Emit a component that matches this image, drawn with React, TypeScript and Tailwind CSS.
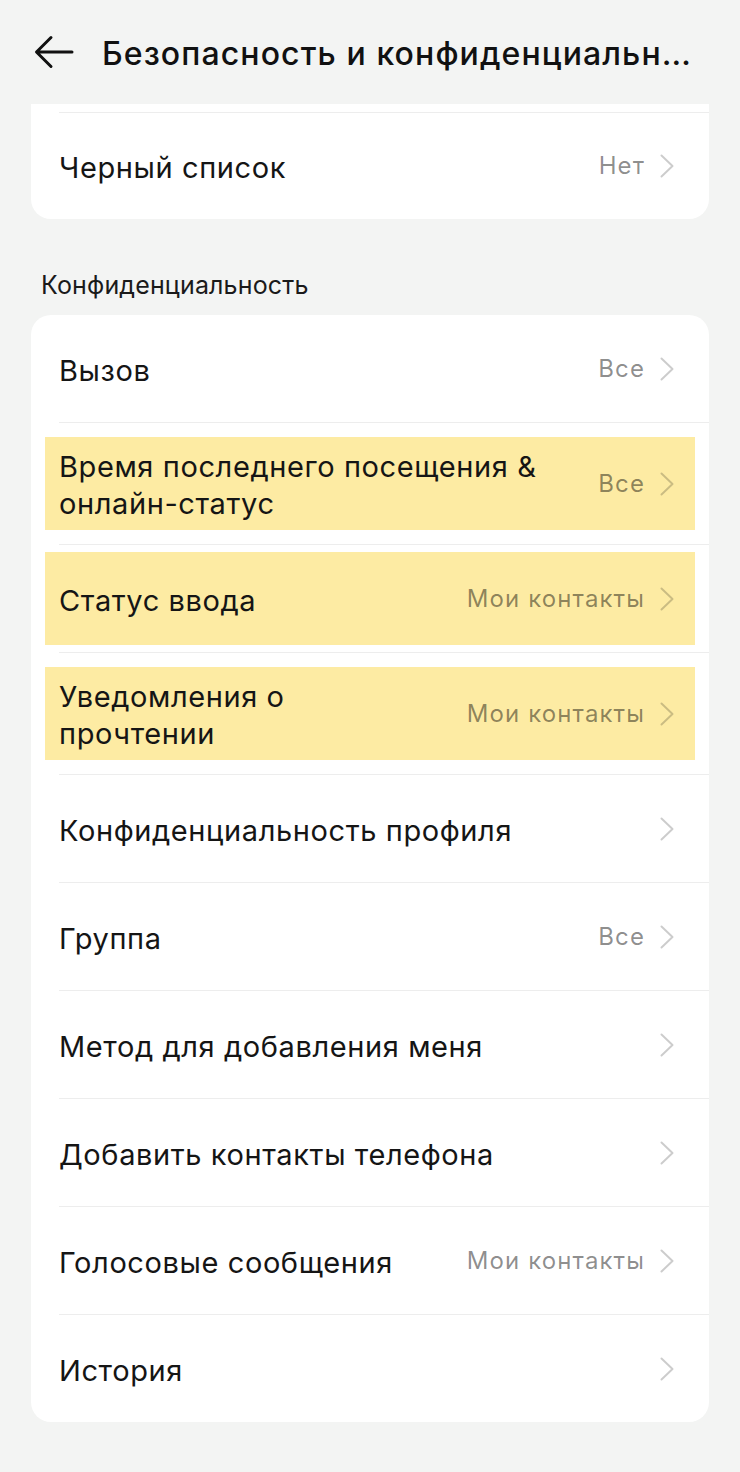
import React from 'react';

type Row = { label: string; value?: string; hl?: boolean; two?: boolean };

const privacyRows: Row[] = [
  { label: 'Вызов', value: 'Все' },
  { label: 'Время последнего посещения &\nонлайн-статус', value: 'Все', hl: true, two: true },
  { label: 'Статус ввода', value: 'Мои контакты', hl: true },
  { label: 'Уведомления о\nпрочтении', value: 'Мои контакты', hl: true, two: true },
  { label: 'Конфиденциальность профиля' },
  { label: 'Группа', value: 'Все' },
  { label: 'Метод для добавления меня' },
  { label: 'Добавить контакты телефона' },
  { label: 'Голосовые сообщения', value: 'Мои контакты' },
  { label: 'История' },
];

function Chevron() {
  return (
    <svg width="14" height="24" viewBox="0 0 14 24" fill="none" className="shrink-0">
      <path d="M1.5 1.5 L12.5 12 L1.5 22.5" stroke="rgba(0,0,0,0.2)" strokeWidth="2" strokeLinecap="round" strokeLinejoin="round" />
    </svg>
  );
}

function Value({ text }: { text: string }) {
  return <span className="text-[24px] tracking-[1.1px] text-black/45 mr-[15px] whitespace-nowrap">{text}</span>;
}

function SettingRow({ row, first }: { row: Row; first?: boolean }) {
  return (
    <div>
      {!first && <div className="ml-[28px] h-px bg-[#ededed]" />}
      <div className={row.two ? 'py-[14px]' : 'py-[7px]'}>
        <div className={`mx-[14px] min-h-[93px] flex items-center pl-[14px] pr-[21px] ${row.hl ? 'bg-[#fdeba3]' : ''}`}>
          <div className="flex-1 text-[29px] tracking-[0.6px] leading-[37px] text-[#151515] pr-6 whitespace-pre-line pt-[3px]">
            {row.label}
          </div>
          {row.value && <Value text={row.value} />}
          <Chevron />
        </div>
      </div>
    </div>
  );
}

export default function App() {
  return (
    <div className="min-h-[1472px] w-[740px] bg-[#f3f4f3]" style={{ fontFamily: 'Inter, "Noto Sans", sans-serif' }}>
      {/* Header */}
      <div className="h-[104px] flex items-center pl-[34px] pr-[44px]">
        <svg width="40" height="34" viewBox="0 0 40 34" fill="none" className="shrink-0">
          <path d="M38 17 H3 M17 2.5 L2.5 17 L17 31.5" stroke="#111" strokeWidth="3" strokeLinecap="round" strokeLinejoin="round" />
        </svg>
        <h1 className="ml-[28px] pt-[4px] truncate text-[32px] font-medium tracking-[1.1px] text-[#111]">
          Безопасность и конфиденциальность
        </h1>
      </div>

      {/* First card (scrolled) */}
      <div className="mx-[31px] bg-white rounded-b-[20px]">
        <div className="h-[8px]" />
        <div className="ml-[28px] h-px bg-[#ededed]" />
        <div className="h-[106px] flex items-center pl-[28px] pr-[35px]">
          <div className="flex-1 text-[29px] tracking-[0.6px] text-[#151515] pt-[3px]">Черный список</div>
          <Value text="Нет" />
          <Chevron />
        </div>
      </div>

      <div className="pt-[51px] pb-[14px] pl-[41px] text-[25px] tracking-[0.15px] leading-[31px] text-[#1a1a1a]">
        Конфиденциальность
      </div>

      <div className="mx-[31px] bg-white rounded-[20px]">
        {privacyRows.map((r, i) => (
          <SettingRow key={r.label} row={r} first={i === 0} />
        ))}
      </div>
    </div>
  );
}
